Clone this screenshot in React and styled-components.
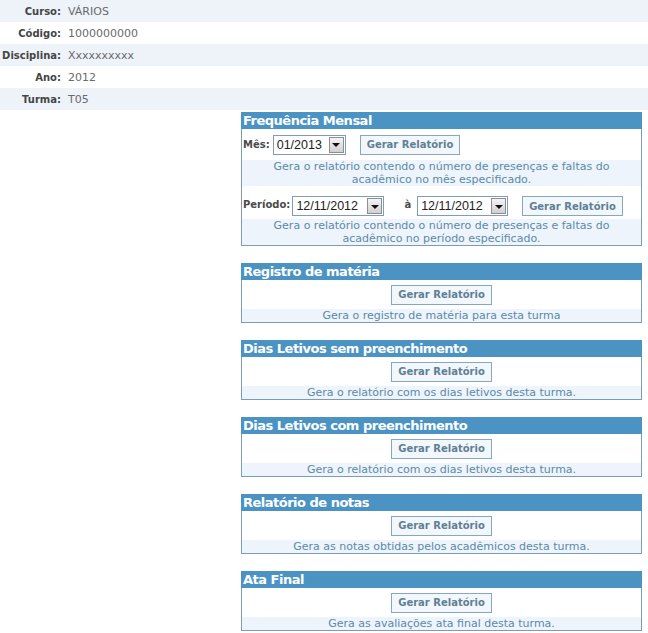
import React from "react";
import styled, { createGlobalStyle } from "styled-components";

const Global = createGlobalStyle`
  html, body { margin: 0; padding: 0; background: #ffffff; }
  body { font-family: "DejaVu Sans", Verdana, sans-serif; }
`;

const Page = styled.div`
  width: 648px;
  display: flex;
  flex-direction: column;
`;

const InfoTable = styled.div`
  display: flex;
  flex-direction: column;
`;

const InfoRow = styled.div`
  display: grid;
  grid-template-columns: 61px 1fr;
  column-gap: 7px;
  height: 22px;
  align-items: center;
  background: ${(p) => (p.$alt ? "#eef3fa" : "#ffffff")};
`;

const InfoLabel = styled.span`
  text-align: right;
  font-weight: bold;
  font-size: 10px;
  color: #454545;
`;

const InfoValue = styled.span`
  font-size: 11px;
  color: #6a6a6a;
`;

const Panels = styled.div`
  margin: 2px 0 0 241px;
  width: 401px;
  display: flex;
  flex-direction: column;
  gap: 17px;
`;

const Panel = styled.section`
  border: 1px solid #7c9cb3;
  border-top: none;
  display: flex;
  flex-direction: column;
`;

const PanelHeader = styled.h2`
  margin: 0 -1px;
  height: 17px;
  line-height: 18px;
  padding-left: 2px;
  background: #4b93c3;
  color: #ffffff;
  font-size: 13px;
  letter-spacing: -0.5px;
  font-weight: bold;
`;

const FormRow = styled.div`
  display: flex;
  align-items: ${(p) => (p.$bottom ? "flex-end" : "center")};
  height: ${(p) => p.$h}px;
  box-sizing: border-box;
  padding: 0 0 ${(p) => p.$pb || 0}px 1px;
  background: #ffffff;
`;

const CenterRow = styled.div`
  display: flex;
  justify-content: center;
  align-items: center;
  height: 29px;
  background: #ffffff;
`;

const FieldLabel = styled.span`
  font-size: 10px;
  font-weight: bold;
  color: #4a4a4a;
  margin-left: ${(p) => p.$ml || 0}px;
  align-self: center;
  margin-top: ${(p) => p.$mt || 0}px;
`;

const Desc = styled.p`
  margin: 0;
  background: #eef4fb;
  color: #5b8aa8;
  font-size: 11px;
  line-height: ${(p) => p.$lh || 12}px;
  text-align: center;
`;

const Button = styled.button`
  margin-left: ${(p) => p.$ml || 0}px;
  height: 20px;
  padding: 0 6px;
  border: 1px solid #86a8bd;
  background: #f1f7fb;
  color: #5f7f96;
  font-family: "DejaVu Sans", Verdana, sans-serif;
  font-size: 10px;
  font-weight: bold;
  white-space: nowrap;
  cursor: pointer;
`;

const SelectBox = styled.div`
  margin-left: ${(p) => p.$ml || 0}px;
  width: ${(p) => p.$w}px;
  height: 20px;
  box-sizing: border-box;
  border: 1px solid #7f9db9;
  background: #ffffff;
  display: flex;
  align-items: center;
  justify-content: space-between;
  padding: 1px;
`;

const SelectText = styled.span`
  font-family: "Liberation Sans", Arial, sans-serif;
  font-size: 12.5px;
  color: #222;
  padding-left: 2px;
`;

const Arrow = styled.span`
  width: 15px;
  height: 16px;
  box-sizing: border-box;
  border: 1px solid #8e8e8e;
  background: linear-gradient(#f4f4f4, #d0d0d0);
  display: flex;
  align-items: center;
  justify-content: center;
  &::after {
    content: "";
    border-left: 4px solid transparent;
    border-right: 4px solid transparent;
    border-top: 4px solid #111;
    margin-top: 1px;
  }
`;

const Select = ({ value, w, ml }) => (
  <SelectBox $w={w} $ml={ml}>
    <SelectText>{value}</SelectText>
    <Arrow />
  </SelectBox>
);

const info = [
  ["Curso:", "VÁRIOS"],
  ["Código:", "1000000000"],
  ["Disciplina:", "Xxxxxxxxxx"],
  ["Ano:", "2012"],
  ["Turma:", "T05"],
];

const simplePanels = [
  ["Registro de matéria", "Gera o registro de matéria para esta turma"],
  ["Dias Letivos sem preenchimento", "Gera o relatório com os dias letivos desta turma."],
  ["Dias Letivos com preenchimento", "Gera o relatório com os dias letivos desta turma."],
  ["Relatório de notas", "Gera as notas obtidas pelos acadêmicos desta turma."],
  ["Ata Final", "Gera as avaliações ata final desta turma."],
];

export default function App() {
  return (
    <Page>
      <Global />
      <InfoTable>
        {info.map(([l, v], i) => (
          <InfoRow key={l} $alt={i % 2 === 0}>
            <InfoLabel>{l}</InfoLabel>
            <InfoValue>{v}</InfoValue>
          </InfoRow>
        ))}
      </InfoTable>
      <Panels>
        <Panel>
          <PanelHeader>Frequência Mensal</PanelHeader>
          <FormRow $h={31}>
            <FieldLabel>Mês:</FieldLabel>
            <Select value="01/2013" w={73} ml={3} />
            <Button $ml={14}>Gerar Relatório</Button>
          </FormRow>
          <Desc $lh={13}>
            Gera o relatório contendo o número de presenças e faltas do
            <br />
            acadêmico no mês especificado.
          </Desc>
          <FormRow $h={33} $bottom $pb={3}>
            <FieldLabel $mt={6}>Período:</FieldLabel>
            <Select value="12/11/2012" w={92} ml={2} />
            <FieldLabel $ml={20} $mt={6}>à</FieldLabel>
            <Select value="12/11/2012" w={91} ml={6} />
            <Button $ml={14}>Gerar Relatório</Button>
          </FormRow>
          <Desc $lh={13}>
            Gera o relatório contendo o número de presenças e faltas do
            <br />
            acadêmico no período especificado.
          </Desc>
        </Panel>
        {simplePanels.map(([title, desc]) => (
          <Panel key={title}>
            <PanelHeader>{title}</PanelHeader>
            <CenterRow>
              <Button>Gerar Relatório</Button>
            </CenterRow>
            <Desc $lh={13}>{desc}</Desc>
          </Panel>
        ))}
      </Panels>
    </Page>
  );
}
